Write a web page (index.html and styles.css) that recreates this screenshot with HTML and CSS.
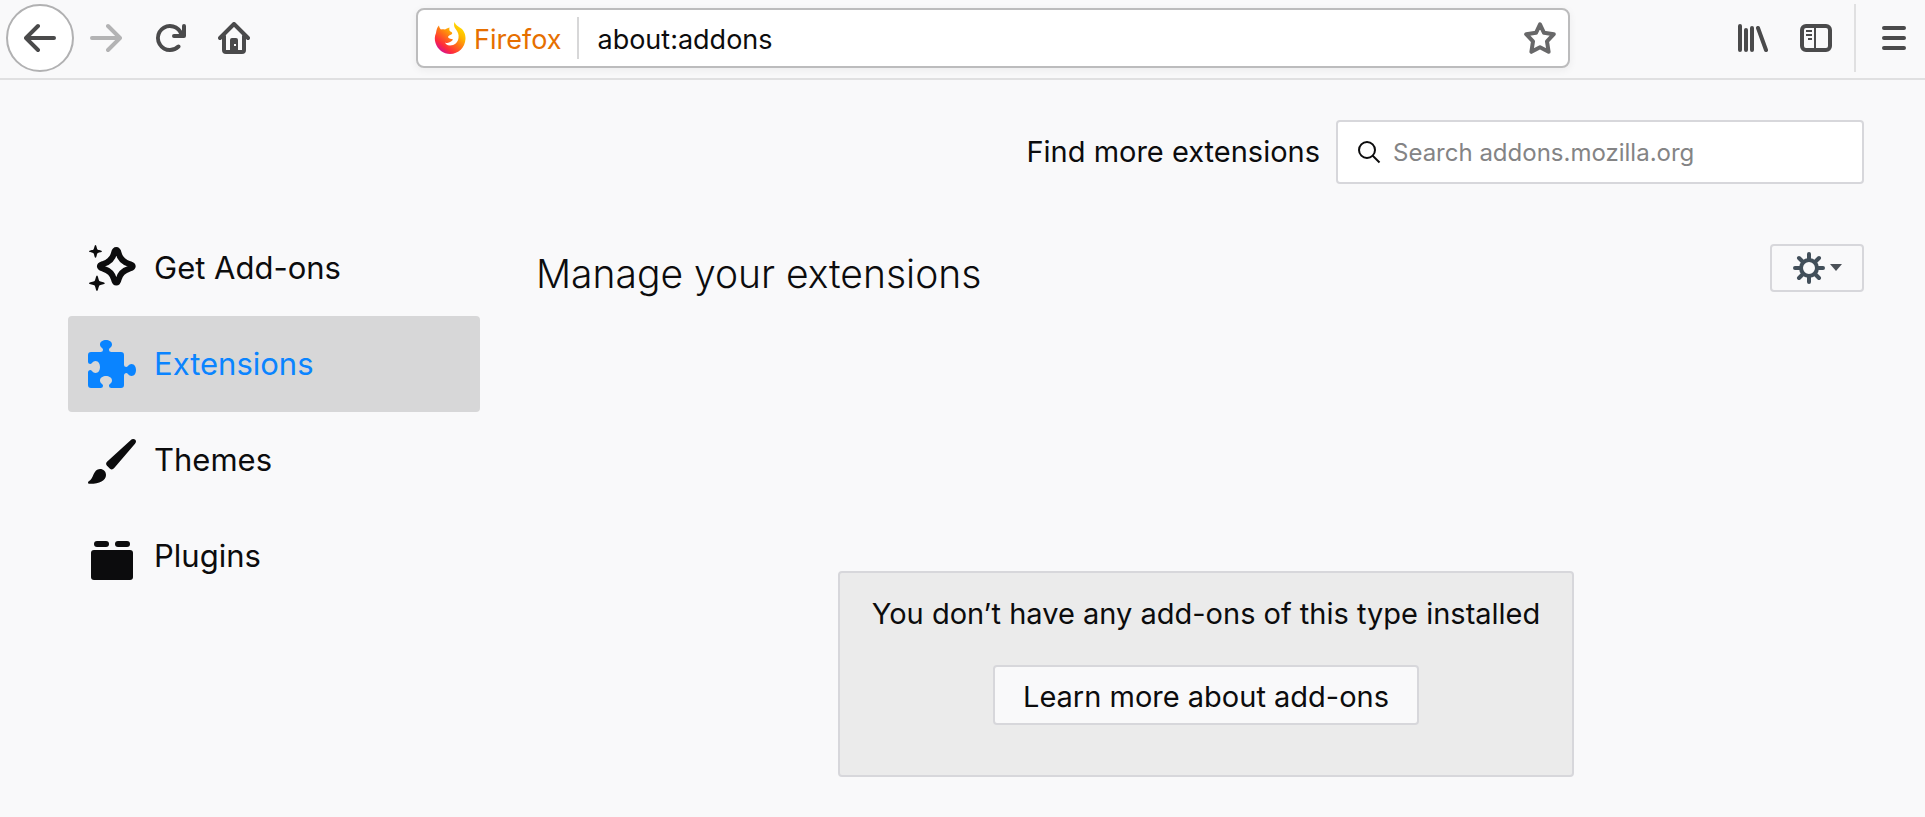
FILE: index.html
```html
<!DOCTYPE html>
<html lang="en">
<head>
<meta charset="utf-8">
<title>Add-ons Manager</title>
<link rel="stylesheet" href="styles.css">
</head>
<body>
<header class="toolbar">
  <nav class="nav-buttons" aria-label="Navigation">
    <button class="tool back" aria-label="Back"><svg class="icon" viewBox="0 0 16 16"><path d="M15 7H3.414l4.293-4.293a1 1 0 0 0-1.414-1.414l-6 6a1 1 0 0 0 0 1.414l6 6a1 1 0 0 0 1.414-1.414L3.414 9H15a1 1 0 0 0 0-2z"/></svg></button>
    <button class="tool forward" aria-label="Forward" disabled><svg class="icon" viewBox="0 0 16 16"><path d="M1 7h11.586L8.293 2.707a1 1 0 0 1 1.414-1.414l6 6a1 1 0 0 1 0 1.414l-6 6a1 1 0 0 1-1.414-1.414L12.586 9H1a1 1 0 0 1 0-2z"/></svg></button>
    <button class="tool" aria-label="Reload"><svg class="icon" viewBox="0 0 16 16"><path d="M15 1a1 1 0 0 0-1 1v2.418A6.995 6.995 0 1 0 8 15a6.954 6.954 0 0 0 4.95-2.05 1 1 0 0 0-1.414-1.414A5.019 5.019 0 1 1 12.549 6H10a1 1 0 0 0 0 2h5a1 1 0 0 0 1-1V2a1 1 0 0 0-1-1z"/></svg></button>
    <button class="tool" aria-label="Home"><svg class="icon" viewBox="0 0 16 16"><path class="line" d="M1 8l7-7 7 7M3 7v7a1 1 0 0 0 1 1h8a1 1 0 0 0 1-1V7"/><path fill-rule="evenodd" d="M7 8h2a1 1 0 0 1 1 1v6H6V9a1 1 0 0 1 1-1zm1 3v1h1v-1z"/></svg></button>
  </nav>
  <div class="urlbar">
    <span class="identity">
      <svg class="icon" viewBox="0 0 32 32">
        <defs>
          <linearGradient id="flame" x1="0.85" y1="0.1" x2="0.2" y2="0.95"><stop offset="0" stop-color="#ffe100"/><stop offset="0.3" stop-color="#ffb000"/><stop offset="0.55" stop-color="#ff6a1a"/><stop offset="0.8" stop-color="#ff2a3c"/><stop offset="1" stop-color="#d0109a"/></linearGradient>
        </defs>
        <path fill="url(#flame)" d="M20.500 0C19.500 3 20 5 22 7.500C24 10 25 12.500 24.500 16C24 20.500 20.500 23.500 16 23.500C13 23.500 11.500 22 11 20.500C13 21.500 15 21 17 19.500C18.500 18.500 19 18 18.500 17C16.500 17 14.500 16.500 14 15C14.500 13.500 16.500 13 18 12C18.500 11 18 10 16.500 9.500C15.500 9 15 8 15.500 5.500C13.500 6 12 7 11 7.500C9.500 7 8 7 7 7.500C6 6.500 5 5 5 3.500C3 5 2.500 8 2 11C.5 14 .5 18 1.500 21C3.500 27.500 9.500 32 16 32C24.500 32 31 25.500 31.500 17C31.800 12 29.500 8 26.500 6C24 4 21.500 3 20.500 0z"/>
      </svg>
      <span class="identity-label">Firefox</span>
    </span>
    <input class="url" type="text" value="about:addons" aria-label="Address">
    <button class="star" aria-label="Bookmark this page"><svg class="icon" viewBox="0 0 16 16"><path class="line" d="M8 1.200l2 4.200 4.900.7-3.400 3.600.8 5.200L8 12.600l-4.300 2.300.8-5.200L1.100 6.100 6 5.400z"/></svg></button>
  </div>
  <div class="tool-buttons">
    <button class="tool" aria-label="Library"><svg class="icon" viewBox="0 0 16 16"><path class="line" d="M2 2v12M5 4v10M8 3v11M11 3l4 11"/></svg></button>
    <button class="tool" aria-label="Sidebars"><svg class="icon" viewBox="0 0 16 16"><rect class="line" x="1" y="2" width="14" height="12" rx="2"/><path d="M7 3h1v10H7zM3 4h3v1H3zM3 6h3v1H3zM4 8h2v1H4z"/></svg></button>
    <div class="menu-slot"><button class="tool menu" aria-label="Open menu"><svg class="icon" viewBox="0 0 16 16"><path class="line" d="M3 3h10M3 8h10M3 13h10"/></svg></button></div>
  </div>
</header>
<div class="page">
  <nav class="categories" aria-label="Add-on types">
    <a class="category" href="#discover"><svg class="category-icon" viewBox="0 0 48 48"><path class="sparkle" d="M28.300 6c1.500 0 1.900 1.400 2.300 3.200 1.300 5.600 4.500 8.800 10.800 10.800 1.900.6 3.300.9 3.300 2.300s-1.400 1.700-3.300 2.300c-6.300 2-9.500 5.200-10.800 10.800-.4 1.800-.8 3.200-2.300 3.200s-1.900-1.400-2.300-3.200c-1.300-5.600-4.500-8.800-10.800-10.800-1.900-.6-3.300-.9-3.300-2.300s1.400-1.700 3.300-2.300c6.300-2 9.500-5.200 10.800-10.800.4-1.800.8-3.200 2.300-3.200z"/><path d="M7.500 1c1 0 1.300 3.800 2 4.500S14 6.300 14 7.300s-3.800 1.300-4.500 2-1 4.500-2 4.500-1.300-3.800-2-4.500-4.500-1-4.500-2 3.800-1.100 4.500-1.800S6.500 1 7.500 1zM9 31.500c1.100 0 1.600 4.700 2.400 5.500s5.400 1.200 5.400 2.300-4.600 1.500-5.400 2.300S10.100 47 9 47s-1.600-4.600-2.400-5.400S1 40.400 1 39.300 5.800 37.800 6.600 37 7.900 31.500 9 31.500z"/></svg><span class="category-name">Get Add-ons</span></a>
    <a class="category selected" href="#extensions" aria-current="page"><svg class="category-icon" viewBox="0 0 48 48"><path d="M3 12h9.500q2.500 0 2.500-2.500C15 8 12 7.500 12 4.500S15 0 18 0s6 1.500 6 4.500-3 3.500-3 5q0 2.500 2.500 2.500H33a3 3 0 0 1 3 3v9.500q0 2.500 2.500 2.500c1.500 0 2-3 5-3s4.500 3 4.500 6-1.500 6-4.500 6-3.500-3-5-3q-2.500 0-2.500 2.500V45a3 3 0 0 1-3 3h-9.500q-2.500 0-2.500-2.500c0-1.500 3-2 3-5s-3-4.500-6-4.500-6 1.500-6 4.500 3 3.500 3 5q0 2.500-2.500 2.500H3a3 3 0 0 1-3-3V32.500Q0 30 2.500 30c1.500 0 2 3 5 3s4.500-3 4.500-6-1.500-6-4.500-6-3.500 3-5 3Q0 24 0 21.500V15a3 3 0 0 1 3-3z"/></svg><span class="category-name">Extensions</span></a>
    <a class="category" href="#themes"><svg class="category-icon" viewBox="0 0 48 48"><path d="M45.200 3c1.800 0 2.800 1.100 2.800 2.500 0 .8-.3 1.400-1 2.200L26 32.300c-1 1.300-2.800 1.500-4 .4l-3-2.900c-1.200-1.200-1.200-3 0-4.100L42.600 4.200c.8-.8 1.600-1.200 2.600-1.200zM12 33c3.500 0 6 2.500 6 6 0 5.500-7 9-16.500 8.800-1.700-.1-2-1.800-.7-2.500C6 42.500 5 33 12 33z"/></svg><span class="category-name">Themes</span></a>
    <a class="category" href="#plugins"><svg class="category-icon" viewBox="0 0 48 48"><rect x="6" y="9" width="15" height="6" rx="3"/><rect x="27" y="9" width="15" height="6" rx="3"/><rect x="3" y="18" width="42" height="30" rx="3"/></svg><span class="category-name">Plugins</span></a>
  </nav>
  <main class="content">
    <form class="search-row">
      <label class="search-label" for="search">Find more extensions</label>
      <div class="search-box">
        <svg class="search-icon" viewBox="0 0 24 24"><circle cx="10" cy="10" r="8"/><path d="M15.500 15.500l7 7"/></svg>
        <input class="search-input" id="search" type="text" placeholder="Search addons.mozilla.org">
      </div>
    </form>
    <div class="heading-row">
      <h1 class="heading">Manage your extensions</h1>
      <button class="gear" aria-label="Tools for all add-ons">
        <svg class="icon" viewBox="0 0 32 32"><circle cx="16" cy="16" r="8"/><path d="M16 2v5M16 25v5M2 16h5M25 16h5M6 6l4 4M22 22l4 4M6 26l4-4M22 10l4-4"/></svg>
        <svg class="caret" viewBox="0 0 14 8"><path d="M0 0h14L7 8z"/></svg>
      </button>
    </div>
    <div class="list">
      <section class="empty">
        <p class="empty-text">You don’t have any add-ons of this type installed</p>
        <button class="learn">Learn more about add-ons</button>
      </section>
    </div>
  </main>
</div>
</body>
</html>
```

FILE: styles.css
```css
* { box-sizing: border-box; }
body {
  margin: 0;
  min-height: 100vh;
  background: #f9f9fa;
  color: #0c0c0d;
  font-family: Inter, "Liberation Sans", sans-serif;
  font-size: 29px;
}
button, input { font: inherit; color: inherit; }
button { margin: 0; padding: 0; }

.icon { display: block; width: 32px; height: 32px; fill: currentColor; }
.line {
  fill: none;
  stroke: currentColor;
  stroke-width: 2;
  stroke-linecap: round;
  stroke-linejoin: round;
}

.toolbar {
  display: flex;
  align-items: center;
  height: 80px;
  padding: 0 7px 2px 6px;
  border-bottom: 2px solid #e0e0e1;
  color: #4a4a4b;
  font-size: 27px;
}
.nav-buttons { display: flex; align-items: center; width: 410px; flex: none; }
.tool {
  display: grid;
  place-items: center;
  width: 64px;
  height: 64px;
  border: 0;
  background: none;
}
.back {
  width: 68px;
  height: 68px;
  border: 2px solid #b1b1b2;
  border-radius: 50%;
  background: #fff;
}
.forward { color: #b3b3b4; }

.urlbar {
  display: flex;
  align-items: center;
  flex: 1;
  height: 60px;
  padding: 0 12px 0 16px;
  border: 2px solid #bcbcbd;
  border-radius: 8px;
  background: #fff;
  box-shadow: 0 2px 8px rgba(0, 0, 0, 0.06);
}
.identity {
  display: flex;
  align-items: center;
  gap: 8px;
  height: 42px;
  padding-right: 16px;
  border-right: 2px solid #d7d7d8;
  color: #e66f00;
}
.identity-label { padding-top: 2px; }
.url {
  flex: 1;
  min-width: 0;
  padding: 2px 0 0 18px;
  border: 0;
  outline: 0;
  background: none;
  color: #0c0c0d;
}
.star { border: 0; background: none; color: #686869; }

.tool-buttons { display: flex; align-items: center; padding-left: 150px; }
.menu-slot {
  display: flex;
  align-items: center;
  height: 68px;
  margin-left: 6px;
  padding-left: 14px;
  border-left: 2px solid #e0e0e1;
}
.menu { width: 48px; }

.page {
  display: grid;
  grid-template-columns: 412px 1fr;
  column-gap: 56px;
  padding: 40px 61px 40px 68px;
}
.categories { padding-top: 100px; }
.category {
  display: flex;
  align-items: center;
  gap: 18px;
  height: 96px;
  padding: 0 20px;
  border-radius: 4px;
  color: #0c0c0d;
  font-size: 31px;
  text-decoration: none;
}
.category-name { padding-bottom: 2px; }
.selected { background: #d7d7d8; color: #0a84ff; }
.category-icon { width: 48px; height: 48px; flex: none; fill: currentColor; }
.sparkle { fill: none; stroke: currentColor; stroke-width: 6; stroke-linejoin: round; }

.search-row { display: flex; justify-content: flex-end; align-items: center; gap: 16px; }
.search-label { padding-bottom: 2px; }
.search-box {
  display: flex;
  align-items: center;
  gap: 12px;
  width: 528px;
  height: 64px;
  padding: 0 20px 0 19px;
  border: 2px solid #d7d7db;
  border-radius: 4px;
  background: #fff;
}
.search-icon { width: 24px; height: 24px; flex: none; fill: none; stroke: #0c0c0d; stroke-width: 2; }
.search-input { flex: 1; min-width: 0; padding: 0; border: 0; outline: 0; background: none; font-size: 24px; }
.search-input::placeholder { color: #848485; opacity: 1; }

.heading-row { display: flex; justify-content: space-between; align-items: flex-start; margin-top: 60px; }
.heading { margin: 0; font-size: 39px; line-height: 60px; font-weight: 300; }
.gear {
  display: flex;
  align-items: center;
  justify-content: center;
  gap: 5px;
  width: 94px;
  height: 48px;
  border: 2px solid #d7d7db;
  border-radius: 4px;
  background: none;
  color: #424f5a;
}
.gear .icon { fill: none; stroke: currentColor; stroke-width: 4; stroke-linecap: round; }
.caret { width: 12px; height: 7px; margin-bottom: 2px; fill: #4c5158; }

.list { padding: 267px 0 0 12px; }
.empty {
  display: flex;
  flex-direction: column;
  align-items: center;
  width: fit-content;
  margin: 0 auto;
  padding: 22px 32px 50px;
  border: 2px solid #d7d7db;
  border-radius: 4px;
  background: #ebebeb;
}
.empty-text { margin: 0 0 32px; line-height: 38px; }
.learn {
  height: 60px;
  padding: 2px 28px 0;
  border: 2px solid #d7d7db;
  border-radius: 4px;
  background: #f9f9fa;
}
```
